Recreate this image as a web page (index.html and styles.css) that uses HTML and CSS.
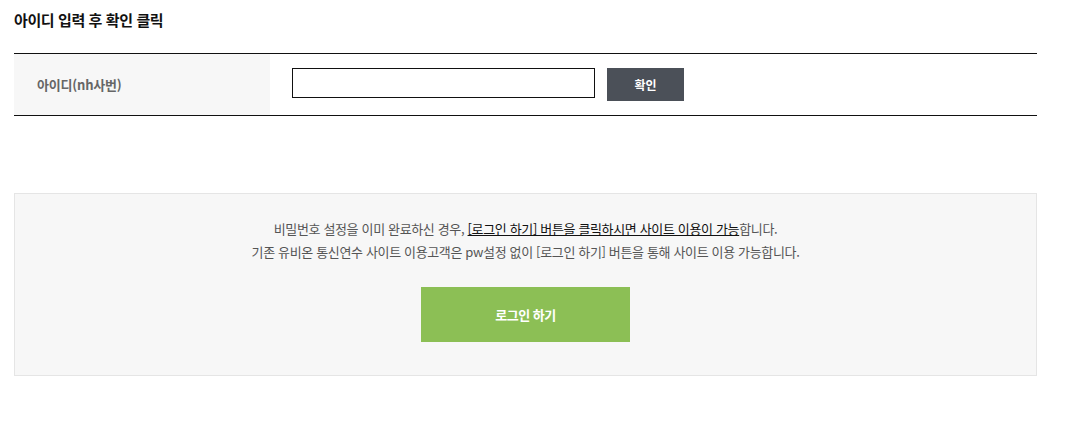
FILE: index.html
```html
<!DOCTYPE html>
<html lang="ko">
<head>
<meta charset="utf-8">
<link rel="stylesheet" href="styles.css">
</head>
<body>
<div class="wrap">
  <h2 class="title">아이디 입력 후 확인 클릭</h2>
  <table class="form-table">
    <tr>
      <th>아이디(nh사번)</th>
      <td>
        <div class="field-row">
          <input type="text" class="id-input">
          <button class="btn-confirm" type="button">확인</button>
        </div>
      </td>
    </tr>
  </table>
  <div class="info-box">
    <p class="info-text">비밀번호 설정을 이미 완료하신 경우, <span class="emph">[로그인 하기] 버튼을 클릭하시면 사이트 이용이 가능</span>합니다.<br>기존 유비온 통신연수 사이트 이용고객은 pw설정 없이 [로그인 하기] 버튼을 통해 사이트 이용 가능합니다.</p>
    <button class="btn-login" type="button">로그인 하기</button>
  </div>
</div>
</body>
</html>
```

FILE: styles.css
```css
* { box-sizing: border-box; }
html, body { margin: 0; padding: 0; background: #fff; }
body {
  font-family: "Noto Sans CJK KR", "Noto Sans", sans-serif;
  color: #333;
}
.wrap {
  width: 1023px;
  margin-left: 14px;
  padding-top: 9px;
}
.title {
  margin: 0;
  font-size: 15px;
  font-weight: 700;
  color: #111;
  letter-spacing: -0.4px;
  line-height: 22px;
}
.form-table {
  width: 100%;
  margin-top: 22px;
  border-collapse: collapse;
  border-top: 1px solid #111;
  border-bottom: 1px solid #111;
}
.form-table th {
  width: 256px;
  height: 62px;
  padding: 0 0 0 23px;
  background: #f7f7f7;
  text-align: left;
  font-size: 13px;
  font-weight: 700;
  color: #666;
  letter-spacing: -0.2px;
}
.form-table td {
  padding: 14px 0 0 22px;
  vertical-align: top;
}
.field-row {
  display: flex;
  align-items: flex-start;
  gap: 12px;
}
.id-input {
  width: 303px;
  height: 30px;
  border: 1px solid #111;
  margin: 0;
  padding: 0 6px;
  font: inherit;
}
.btn-confirm {
  width: 77px;
  height: 33px;
  border: 0;
  margin: 0;
  background: #4b5058;
  color: #fff;
  font-family: inherit;
  font-size: 12px;
  font-weight: 700;
  cursor: pointer;
}
.info-box {
  margin-top: 77px;
  height: 183px;
  background: #f7f7f7;
  border: 1px solid #e5e5e5;
  display: flex;
  flex-direction: column;
  align-items: center;
  padding-top: 23px;
}
.info-text {
  margin: 0;
  text-align: center;
  font-size: 13px;
  line-height: 23px;
  color: #555;
  letter-spacing: -0.35px;
}
.emph {
  color: #111;
  text-decoration: underline;
}
.btn-login {
  margin-top: 24px;
  width: 209px;
  height: 55px;
  border: 0;
  background: #8cbf55;
  color: #fff;
  font-family: inherit;
  font-size: 13px;
  font-weight: 700;
  letter-spacing: -0.5px;
  cursor: pointer;
}
```
